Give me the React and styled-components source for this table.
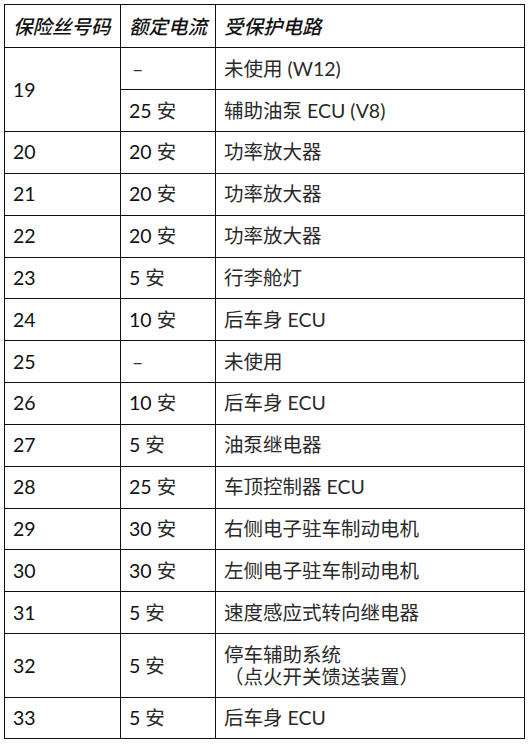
import React from "react";
import styled, { createGlobalStyle } from "styled-components";

const GlobalStyle = createGlobalStyle`
  html, body {
    margin: 0;
    padding: 0;
    background: #ffffff;
  }
  body {
    font-family: Lato, "Noto Sans CJK SC", sans-serif;
    color: #1a1a1a;
  }
`;

const Page = styled.div`
  padding: 4px 5px 6px 4px;
  width: 528px;
  box-sizing: border-box;
`;

const Table = styled.table`
  width: 520px;
  border-collapse: collapse;
  table-layout: fixed;
  font-family: Lato, "Noto Sans CJK SC", sans-serif;
  font-size: 19.5px;
  line-height: 22px;
`;

const Col = styled.col`
  width: ${(p) => p.$w}px;
`;

// row heights measured on the reference, minus what the collapsed border adds
const HeadCell = styled.th`
  border: 1.5px solid #111;
  height: 42.3px;
  padding: 0 0 0 8px;
  text-align: left;
  font-style: italic;
  font-weight: 500;
  color: #111;
  white-space: nowrap;
  font-family: "Noto Sans CJK SC", sans-serif;
`;

const Cell = styled.td`
  border: 1.5px solid #111;
  height: ${(p) => (p.$h || 41.8) - 0.95}px;
  padding: 0 0 0 8px;
  vertical-align: middle;
  text-align: left;
  color: #2a2a2a;
  white-space: nowrap;
`;

const Num = styled.span`
  color: #111;
`;

const Dash = styled.span`
  padding-left: 3px;
  color: #333;
`;

const Line = styled.div`
  display: block;
`;

const rows = [
  { no: "19", span: 2, amp: "", circuit: "未使用 (W12)" },
  { amp: "25 安", circuit: "辅助油泵 ECU (V8)" },
  { no: "20", amp: "20 安", circuit: "功率放大器" },
  { no: "21", amp: "20 安", circuit: "功率放大器" },
  { no: "22", amp: "20 安", circuit: "功率放大器" },
  { no: "23", amp: "5 安", circuit: "行李舱灯" },
  { no: "24", amp: "10 安", circuit: "后车身 ECU" },
  { no: "25", amp: "", circuit: "未使用" },
  { no: "26", amp: "10 安", circuit: "后车身 ECU" },
  { no: "27", amp: "5 安", circuit: "油泵继电器" },
  { no: "28", amp: "25 安", circuit: "车顶控制器 ECU" },
  { no: "29", amp: "30 安", circuit: "右侧电子驻车制动电机" },
  { no: "30", amp: "30 安", circuit: "左侧电子驻车制动电机" },
  { no: "31", amp: "5 安", circuit: "速度感应式转向继电器" },
  { no: "32", amp: "5 安", circuit: ["停车辅助系统", "（点火开关馈送装置）"], h: 64 },
  { no: "33", amp: "5 安", circuit: "后车身 ECU", h: 41 },
];

const Amp = ({ value }) => {
  if (!value) return <Dash>–</Dash>;
  const [n, unit] = value.split(" ");
  return (
    <>
      <Num>{n}</Num> {unit}
    </>
  );
};

const Circuit = ({ value }) => {
  if (Array.isArray(value)) {
    return value.map((line, i) => <Line key={i}>{line}</Line>);
  }
  return value;
};

const App = () => {
  return (
    <>
      <GlobalStyle />
      <Page>
        <Table>
          <colgroup>
            <Col $w={116} />
            <Col $w={95} />
            <Col $w={309} />
          </colgroup>
          <thead>
            <tr>
              <HeadCell>保险丝号码</HeadCell>
              <HeadCell>额定电流</HeadCell>
              <HeadCell>受保护电路</HeadCell>
            </tr>
          </thead>
          <tbody>
            {rows.map((row, index) => (
              <tr key={index}>
                {row.no && (
                  <Cell rowSpan={row.span || 1} $h={row.h}>
                    <Num>{row.no}</Num>
                  </Cell>
                )}
                <Cell $h={row.h}>
                  <Amp value={row.amp} />
                </Cell>
                <Cell $h={row.h}>
                  <Circuit value={row.circuit} />
                </Cell>
              </tr>
            ))}
          </tbody>
        </Table>
      </Page>
    </>
  );
};

export default App;
